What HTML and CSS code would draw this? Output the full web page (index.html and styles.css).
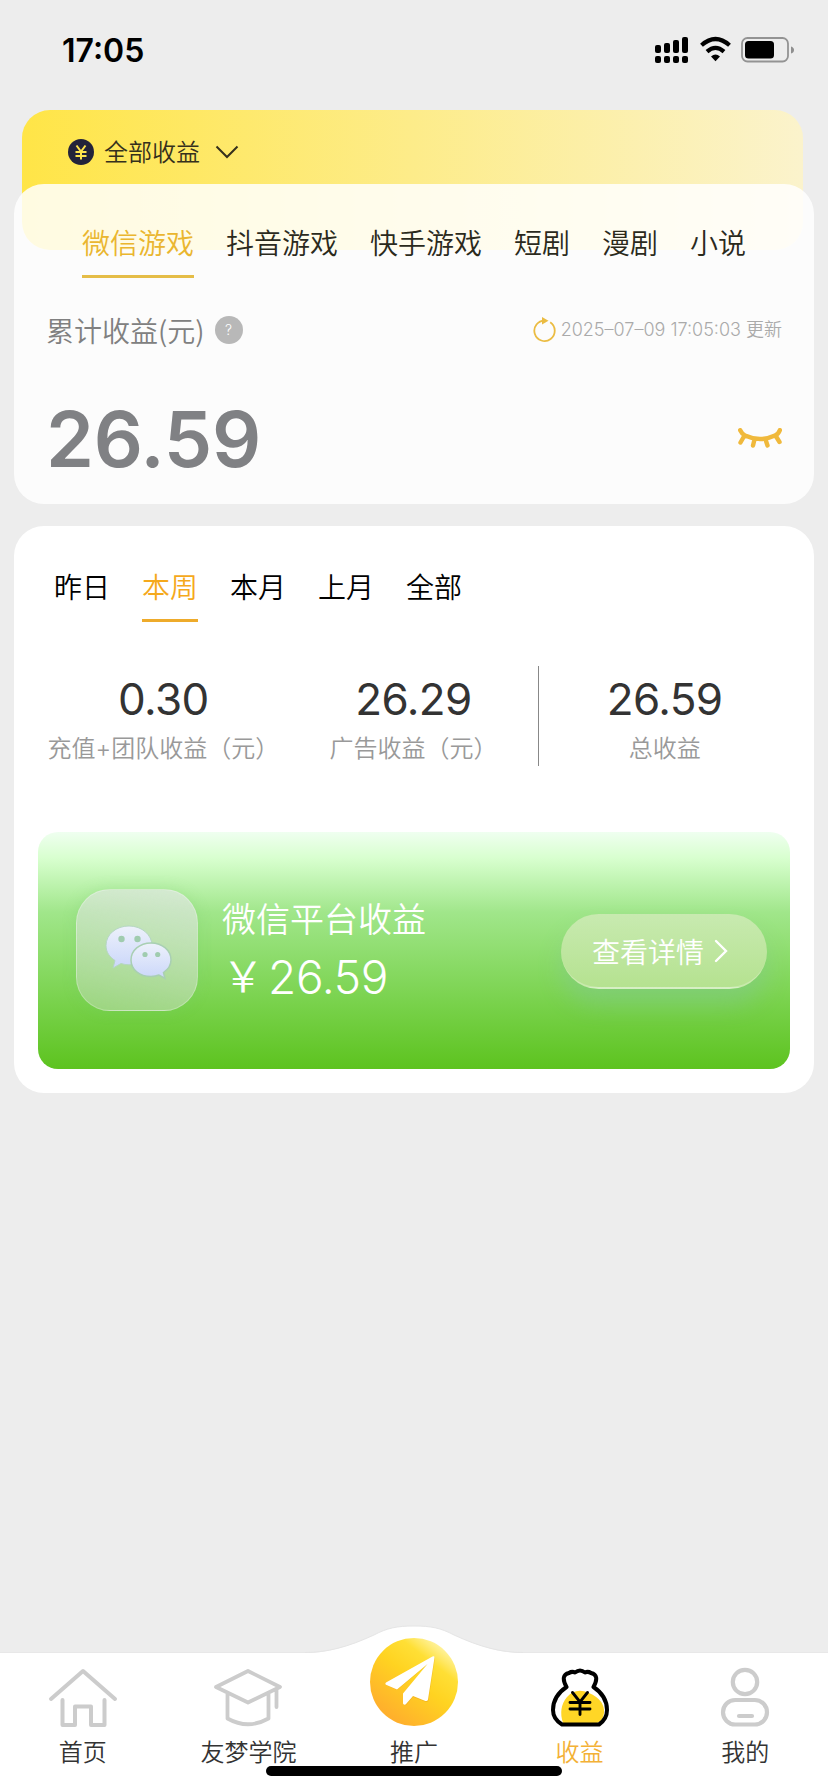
FILE: index.html
```html
<!DOCTYPE html>
<html lang="zh-CN">
<head>
<meta charset="utf-8">
<title>收益</title>
<link rel="stylesheet" href="styles.css">
</head>
<body>
<div class="screen">
  <header class="status">
    <span class="clock">17:05</span>
    <svg class="status-icons" width="142" height="30" viewBox="0 0 142 30">
      <g>
        <rect x="1" y="10" width="6" height="8" rx="2"/><rect x="10" y="8" width="6" height="10" rx="2"/><rect x="19" y="5" width="6" height="13" rx="2"/><rect x="28" y="2" width="6" height="16" rx="2"/>
        <rect x="1" y="21" width="6" height="7" rx="2"/><rect x="10" y="21" width="6" height="7" rx="2"/><rect x="19" y="21" width="6" height="7" rx="2"/><rect x="28" y="21" width="6" height="7" rx="2"/>
      </g>
      <g fill="none" stroke="#000" stroke-width="4.2">
        <path d="M47.500 10.200Q61.500 -2.200 75.500 10.200"/>
        <path d="M53 16.600Q61.500 9.200 70 16.600"/>
      </g>
      <path d="M57 21.500Q61.500 17.700 66 21.500L61.500 26.200Z"/>
      <rect x="88" y="3" width="46" height="23.500" rx="5.500" fill="none" stroke="#939393" stroke-width="1.800"/>
      <rect x="91" y="6" width="29" height="17.500" rx="3.500"/>
      <path d="M137 11.500q3 1 3 3.500t-3 3.500z" fill="#8f8f8f"/>
    </svg>
  </header>

  <main class="content">
    <section class="filter">
      <svg width="26" height="26" viewBox="0 0 26 26"><circle cx="13" cy="13" r="13" fill="#23233a"/><path d="M8.500 6.500l4.500 6 4.500-6M13 12.500v8M7.500 13h11M7.500 17h11" fill="none" stroke="#ffe44d" stroke-width="2"/></svg>
      <span class="filter-label">全部收益</span>
      <svg width="24" height="14" viewBox="0 0 24 14"><path d="M1.500 1.500L12 12 22.500 1.500" fill="none" stroke="#35301c" stroke-width="2"/></svg>
    </section>

    <section class="summary">
      <nav class="tabs tabs-source">
        <span class="tab active">微信游戏</span><span class="tab">抖音游戏</span><span class="tab">快手游戏</span><span class="tab">短剧</span><span class="tab">漫剧</span><span class="tab">小说</span>
      </nav>
      <div class="caption-row">
        <span class="caption">累计收益(元)</span>
        <span class="help">?</span>
        <span class="updated">
          <svg width="24" height="26" viewBox="0 0 24 26"><path d="M17.200 5.300A10.200 10.200 0 1 1 12 3.600" fill="none" stroke="#ebbc42" stroke-width="1.800"/><path d="M9 0L15.500 3.800 9 7.600Z" fill="#ebbc42"/></svg>
          <span class="time">2025–07–09 17:05:03 更新</span>
        </span>
      </div>
      <div class="total-row">
        <span class="total">26.59</span>
        <svg width="44" height="20" viewBox="0 0 44 20"><path d="M2.200 2.200Q4 6 7 7.500Q22 14.500 37 7.500Q40.500 6 41.800 2.200M6.500 7.500L2.500 14.500M37.500 7.500L41.500 14M16.500 11.500L15 17.500M27.500 11.500L29.500 17.500" fill="none" stroke="#f0b93c" stroke-width="4.400" stroke-linecap="round" stroke-linejoin="round"/></svg>
      </div>
    </section>

    <section class="detail">
      <nav class="tabs tabs-period">
        <span class="tab">昨日</span><span class="tab active">本周</span><span class="tab">本月</span><span class="tab">上月</span><span class="tab">全部</span>
      </nav>
      <div class="stats">
        <div class="stat"><span class="value">0.30</span><span class="label">充值+团队收益（元）</span></div>
        <div class="stat ruled"><span class="value">26.29</span><span class="label">广告收益（元）</span></div>
        <div class="stat"><span class="value">26.59</span><span class="label">总收益</span></div>
      </div>
      <article class="platform">
        <div class="logo">
          <svg width="68" height="56" viewBox="0 0 68 56">
            <defs><linearGradient id="bubble" x1="0" y1="0" x2="0" y2="1"><stop offset="0" stop-color="#edf1fb"/><stop offset="1" stop-color="#cbd7fa"/></linearGradient></defs>
            <path d="M24 1C11 1 1 9.500 1 20.500C1 27 4.500 32 10 35.500L8 43L16 38.500Q20 39.800 24 39.800C37 39.800 47 31 47 20.500S37 1 24 1Z" fill="url(#bubble)" stroke="#b5d6c2" stroke-width="1"/>
            <path d="M46 18C34.500 18 26 25.500 26 35S34.500 51.500 46 51.500Q50.500 51.500 54 50L60 53.500L58.500 47.500Q66 42.500 66 35C66 25.500 57.500 18 46 18Z" fill="url(#bubble)" stroke="#a9cfb3" stroke-width="1.500"/>
            <g fill="#a0ccaf"><circle cx="16.500" cy="14" r="3.200"/><circle cx="32.500" cy="14" r="3.200"/><circle cx="40" cy="29.500" r="2.600"/><circle cx="52.700" cy="29.500" r="2.600"/></g>
          </svg>
        </div>
        <div class="platform-text">
          <span class="platform-name">微信平台收益</span>
          <span class="platform-amount"><span class="yen">￥</span>26.59</span>
        </div>
        <span class="more">查看详情<svg width="14" height="24" viewBox="0 0 14 24"><path d="M2 2L12 12 2 22" fill="none" stroke="#fff" stroke-width="2.400" stroke-linecap="round"/></svg></span>
      </article>
    </section>
  </main>

  <footer class="tabbar">
    <svg class="bump" width="218" height="30" viewBox="0 0 218 30"><path d="M0 28C22 28 43 22 69 10C82 3 92 1 109 1S136 3 149 10C175 22 196 28 218 28V30H0Z" fill="#fff"/><path d="M0 27.500C22 27.500 43 22 69 10C82 3 92 1 109 1S136 3 149 10C175 22 196 27.500 218 27.500" fill="none" stroke="#e5e5e5" stroke-width="1"/></svg>
    <a class="item">
      <svg width="70" height="60" viewBox="0 0 70 60"><g fill="none" stroke="#ccc" stroke-width="4" stroke-linecap="round" stroke-linejoin="round"><path d="M3 32L35 4 67 32M14.500 33V58H27V39.500H43V58H56.500V33"/></g></svg>
      <span>首页</span>
    </a>
    <a class="item">
      <svg width="70" height="60" viewBox="0 0 70 60"><g fill="none" stroke="#ccc" stroke-width="3.800" stroke-linecap="round" stroke-linejoin="round"><path d="M3 20L35 4 67 20 35 35.500ZM14.500 26V51.500Q35 63 55.500 51.500V26M63.500 22V40"/></g></svg>
      <span>友梦学院</span>
    </a>
    <a class="item">
      <svg class="promo" width="88" height="88" viewBox="0 0 88 88">
        <defs><linearGradient id="sun" x1=".85" y1=".12" x2=".25" y2=".9"><stop offset="0" stop-color="#fff3a0"/><stop offset=".22" stop-color="#ffdf35"/><stop offset=".5" stop-color="#ffd321"/><stop offset="1" stop-color="#ffb02c"/></linearGradient></defs>
        <circle cx="44" cy="44" r="44" fill="url(#sun)"/>
        <path d="M63 20L17 45Q15 46.500 17 47.500L27 52L57 27L34 57V66Q35 68.500 37 66L43 59L56 64Q58 64.500 58.500 62L65 20Q65 18 63 20Z" fill="#d98b10" opacity=".3"/>
        <path d="M62.500 18.500L16 44.500Q14.500 46 16.500 47L27 51.500L57.500 26L33 55.500V65.500Q34.500 68 36.500 65.500L43 58L55.500 63Q57.500 63.500 58 61.500L64.500 19.500Q64.500 17.500 62.500 18.500Z" fill="#fff"/>
      </svg>
      <span>推广</span>
    </a>
    <a class="item current">
      <svg width="60" height="60" viewBox="0 0 60 60">
        <path d="M13 56Q8 41 17 30Q26 20 39 26Q55 33 54 46Q53 54 47 56Z" fill="#ffd626"/>
        <path d="M16.500 20Q10 8 19 6Q22 4 25 5.500Q30 1.500 35 5.500Q38 4 41 6Q50 8 43.500 20Q57 29 57 43Q57 52 49 57.500H12Q3 52 3 43Q3 29 16.500 20Z" fill="none" stroke="#000" stroke-width="4" stroke-linejoin="round"/>
        <path d="M22.500 25.500L30 35 37.500 25.500M30 35V47.500M20 35.500H40M20 42H40" fill="none" stroke="#000" stroke-width="2.900" stroke-linecap="round"/>
      </svg>
      <span>收益</span>
    </a>
    <a class="item">
      <svg width="60" height="60" viewBox="0 0 60 60"><g fill="none" stroke="#ccc" stroke-width="4.200"><circle cx="30" cy="15" r="12.200"/><rect x="8" y="33" width="44" height="24.500" rx="12.250"/><path d="M24 49H37" stroke-linecap="round"/></g></svg>
      <span>我的</span>
    </a>
    <div class="home-indicator"></div>
  </footer>
</div>
</body>
</html>
```
FILE: styles.css
```css
* { box-sizing: border-box; }

body {
  margin: 0;
  background: #ededed;
  font-family: Inter, "Noto Sans CJK SC", sans-serif;
  font-weight: 350;
}

svg { display: block; flex: none; }

.screen {
  width: 828px;
  height: 1792px;
  display: flex;
  flex-direction: column;
  overflow: hidden;
}

.status {
  height: 110px;
  padding: 35px 32px 0 62px;
  display: flex;
  justify-content: space-between;
}

.clock {
  font-size: 32px;
  font-weight: 600;
  line-height: 31px;
}

.content {
  flex: 1;
  padding: 0 14px;
}

.filter {
  height: 140px;
  margin: 0 11px 0 8px;
  padding: 29px 0 0 46px;
  border-radius: 28px;
  background: linear-gradient(90deg, #ffe547, #fbf3cc);
  display: flex;
  align-items: flex-start;
}

.filter-label {
  margin: 0 15px 0 10px;
  font-size: 24px;
  line-height: 28px;
  color: #35301c;
}

.filter svg:last-child { margin-top: 6px; }

.summary {
  position: relative;
  height: 320px;
  margin-top: -66px;
  padding: 41px 32px 0;
  border-radius: 30px;
  background: rgba(255, 255, 255, .84);
}

.tabs {
  display: flex;
  gap: 32px;
  font-size: 28px;
  line-height: 38px;
}

.tab { height: 53px; border-bottom: 3px solid transparent; }

.tabs-source { padding-left: 36px; color: #2b2a1c; }
.tabs-source .active { color: #eab62f; border-color: #e5bd47; }

.caption-row {
  display: flex;
  align-items: center;
  height: 40px;
  margin-top: 32px;
}

.caption {
  font-family: "Noto Sans CJK SC", sans-serif;
  font-size: 28px;
  line-height: 40px;
  color: #808080;
}

.help {
  width: 28px;
  height: 28px;
  margin-left: 10px;
  border-radius: 50%;
  background: #b8b8b8;
  color: #fff;
  font-size: 14px;
  line-height: 27px;
  text-align: center;
}

.updated {
  margin-left: auto;
  display: flex;
  align-items: center;
  gap: 4px;
  color: #aaa;
}

.time { font-size: 18px; line-height: 26px; white-space: nowrap; }

.total-row {
  display: flex;
  align-items: center;
  justify-content: space-between;
  height: 90px;
  margin-top: 43px;
}

.total {
  padding-top: 1px;
  font-size: 77px;
  font-weight: 600;
  line-height: 90px;
  letter-spacing: -.3px;
  color: #808184;
}

.detail {
  height: 567px;
  margin-top: 22px;
  padding: 43px 24px 0;
  border-radius: 30px;
  background: #fff;
}

.tabs-period { padding-left: 16px; color: #000; }
.tabs-period .active { color: #f5a91c; border-color: #eeab2b; }

.stats {
  display: grid;
  grid-template-columns: repeat(3, 1fr);
  height: 100px;
  margin-top: 44px;
}

.stat {
  display: flex;
  flex-direction: column;
  align-items: center;
  padding-top: 8px;
}

.ruled { border-right: 1px solid #888; }

.value { font-size: 44px; font-weight: 370; line-height: 50px; letter-spacing: -.6px; color: #333; }
.label { margin-top: 9px; font-size: 24px; line-height: 32px; color: #999; white-space: nowrap; }

.platform {
  display: flex;
  height: 237px;
  margin-top: 66px;
  padding: 57px 23px 0 38px;
  border-radius: 20px;
  background: linear-gradient(180deg, #effff0 0, #d8ffcf 11%, #a0e68a 34%, #79d24c 72%, #5dc31f 100%);
}

.logo {
  width: 122px;
  height: 122px;
  padding: 35px 0 0 28px;
  border: 1.5px solid rgba(255, 255, 255, .25);
  border-radius: 34px;
  background: linear-gradient(200deg, rgba(228, 230, 232, .68), rgba(205, 220, 200, .42));
  box-shadow: 0 0 14px rgba(120, 205, 105, .3);
}

.platform-text {
  display: flex;
  flex-direction: column;
  margin: 7px 0 0 24px;
  color: #fff;
}

.platform-name { font-size: 34px; line-height: 48px; }
.platform-amount { display: flex; font-size: 46px; line-height: 50px; margin-top: 8px; letter-spacing: -.3px; }
.yen { width: 46px; font-size: 42px; }

.more {
  display: flex;
  align-items: center;
  gap: 10px;
  width: 206px;
  height: 75px;
  margin: 25px 0 0 auto;
  padding-left: 31px;
  border-radius: 38px;
  border-bottom: 2px solid rgba(255, 255, 255, .25);
  background: linear-gradient(180deg, #c8eab0, #b5e290);
  box-shadow: 0 16px 22px rgba(130, 200, 150, .45);
  color: #fff;
  font-size: 28px;
}

.tabbar {
  position: relative;
  height: 140px;
  background: #fff;
  border-top: 1px solid #e8e8e8;
  display: grid;
  grid-template-columns: repeat(5, 1fr);
}

.bump {
  position: absolute;
  left: 305px;
  top: -28px;
}

.item {
  position: relative;
  display: flex;
  flex-direction: column;
  align-items: center;
  justify-content: flex-end;
  height: 116px;
  font-size: 24px;
  line-height: 32px;
  color: #333;
}

.item svg { margin-bottom: 10px; }
.item .promo { margin-bottom: 11px; }
.current { color: #f3b136; }

.home-indicator {
  position: absolute;
  left: 266px;
  bottom: 16px;
  width: 296px;
  height: 10px;
  border-radius: 5px;
  background: #000;
}
```
